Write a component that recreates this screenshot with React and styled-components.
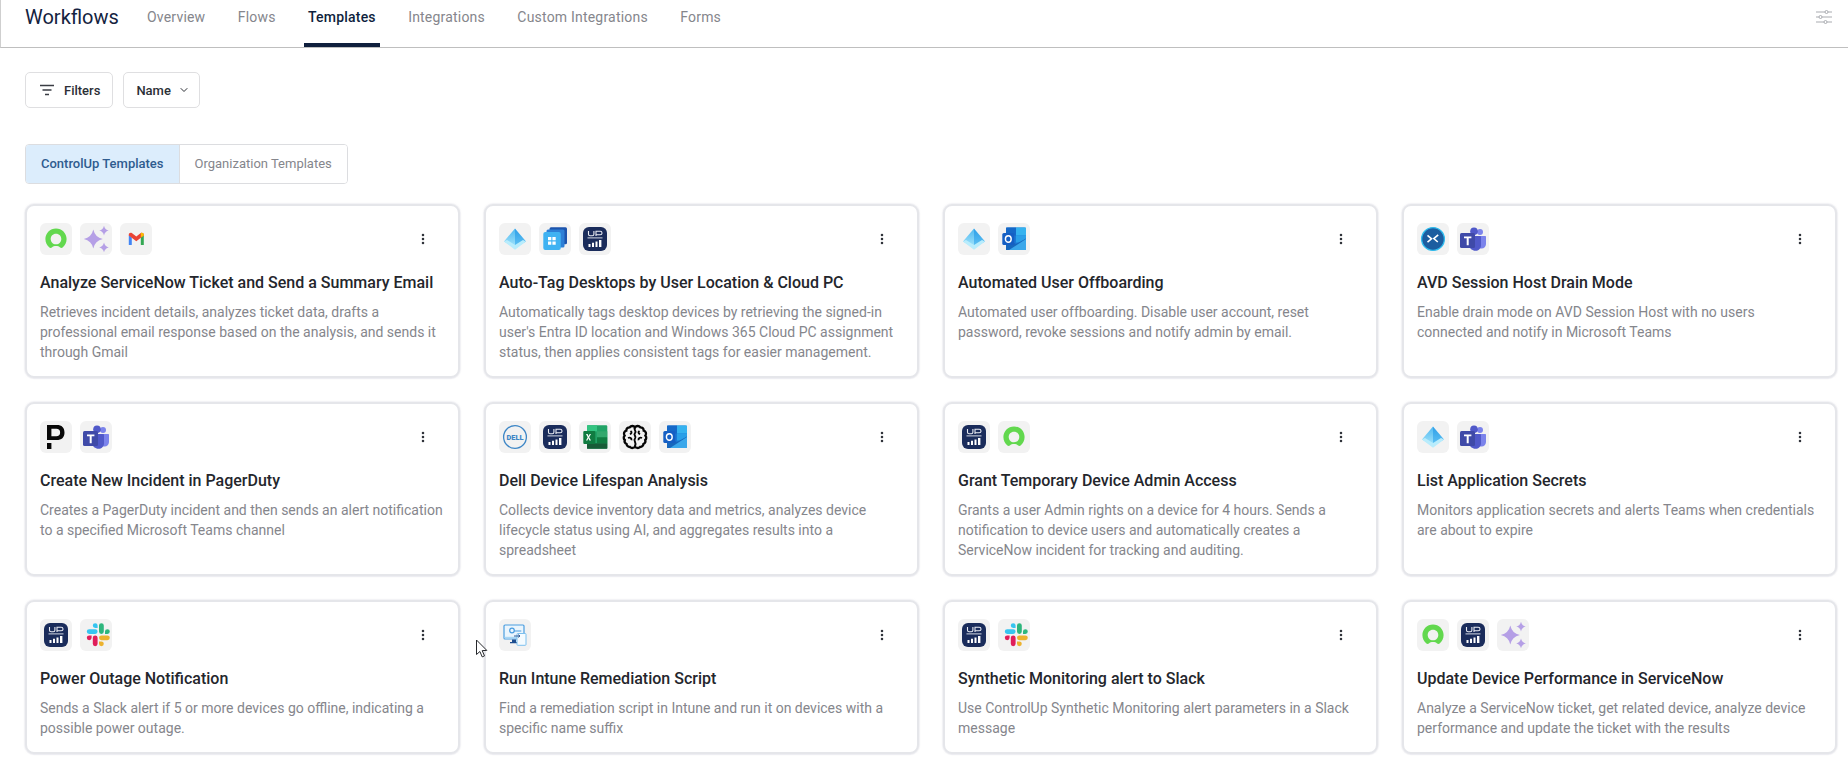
import React from "react";
import styled, { createGlobalStyle } from "styled-components";
import { ChevronDown, MoreVertical } from "lucide-react";

const Global = createGlobalStyle`
  html, body { margin: 0; padding: 0; background: #fff; }
  body { font-family: Roboto, "Liberation Sans", sans-serif; }
  * { box-sizing: border-box; }
`;

const Page = styled.div`
  position: relative;
  width: 1848px;
  height: 768px;
  overflow: hidden;
  background: #fff;
`;
const Header = styled.header`
  height: 48px;
  display: flex;
  align-items: stretch;
  padding: 0 16px 0 24px;
  border-left: 1px solid #cfcfcf;
  border-bottom: 1px solid #bfbfbf;
`;
const Brand = styled.h1`
  margin: 0 25px 0 0;
  font-size: 20px;
  line-height: 35px;
  font-weight: 400;
  color: #14233f;
  width: 93px;
  white-space: nowrap;
`;
const Nav = styled.nav`
  display: flex;
  gap: 24.4px;
  flex: 1;
`;
const NavTab = styled.a`
  padding: 0 4px;
  height: 47px;
  font-size: 14px;
  line-height: 35px;
  letter-spacing: 0.2px;
  font-weight: ${(p) => (p.$active ? 500 : 400)};
  color: ${(p) => (p.$active ? "#0f1f3d" : "#85868c")};
  border-bottom: 4px solid ${(p) => (p.$active ? "#0f1f3d" : "transparent")};
`;
const SettingsIcon = styled.div`
  display: flex;
  align-items: flex-start;
  padding-top: 9px;
  color: #a9abb0;
`;
const Content = styled.main`
  padding: 24px 11px 0 25px;
`;
const Toolbar = styled.div`
  display: flex;
  gap: 10px;
`;
const ToolButton = styled.button`
  height: 36px;
  display: flex;
  align-items: center;
  gap: ${(p) => p.$gap}px;
  padding: 0 ${(p) => p.$right}px 0 ${(p) => p.$left}px;
  background: #fff;
  border: 1px solid #dfdfe1;
  border-radius: 5px;
  font: 500 13px Roboto, sans-serif;
  color: #2c2f36;
`;
const Segmented = styled.div`
  display: inline-flex;
  margin-top: 36px;
  height: 40px;
  border: 1px solid #dcdde0;
  border-radius: 4px;
  overflow: hidden;
`;
const Segment = styled.div`
  display: flex;
  align-items: center;
  padding: 0 15px 2px;
  font-size: 13px;
  font-weight: ${(p) => (p.$active ? 500 : 400)};
  color: ${(p) => (p.$active ? "#2f5c8f" : "#85868c")};
  background: ${(p) => (p.$active ? "#dcedfc" : "#fff")};
  & + & { border-left: 1px solid #dcdde0; }
`;
const Grid = styled.section`
  display: grid;
  grid-template-columns: repeat(4, 435px);
  column-gap: 24px;
  row-gap: 24px;
  margin-top: 20px;
  align-items: start;
`;
const Card = styled.article`
  position: relative;
  height: ${(p) => (p.$tall ? "174px" : "154px")};
  padding: 17px 13px 0;
  background: #fff;
  border: 2px solid #e5e6ea;
  border-radius: 9px;
  box-shadow: 0 0 1px 1px rgba(229, 230, 236, 0.5), 0 1px 1px rgba(30, 35, 70, 0.05);
`;
const CardHead = styled.div`
  display: flex;
  justify-content: space-between;
  align-items: center;
  padding-right: 15px;
`;
const IconRow = styled.div`
  display: flex;
  gap: 8px;
`;
const Tile = styled.span`
  width: 32px;
  height: 32px;
  border-radius: 6px;
  background: #f2f2f2;
  display: flex;
  align-items: center;
  justify-content: center;
`;
const MenuButton = styled.span`
  display: flex;
  color: #30333a;
`;
const Title = styled.h3`
  margin: 16px 0 7px;
  font-size: 16px;
  line-height: 24px;
  font-weight: 500;
  color: #24262c;
  white-space: nowrap;
`;
const Desc = styled.p`
  margin: 0;
  font-size: 14px;
  line-height: 20px;
  color: #85868c;
`;
const CursorMark = styled.svg`
  position: absolute;
  left: 475px;
  top: 639px;
`;

const Svg = ({ children, size = 32 }) => (
  <svg width={size} height={size} viewBox="0 0 32 32">{children}</svg>
);
const star = (x, y, r) =>
  `M${x} ${y - r}Q${x + r * 0.18} ${y - r * 0.18} ${x + r} ${y}Q${x + r * 0.18} ${y + r * 0.18} ${x} ${y + r}Q${x - r * 0.18} ${y + r * 0.18} ${x - r} ${y}Q${x - r * 0.18} ${y - r * 0.18} ${x} ${y - r}Z`;

const icons = {
  sn: (
    <Svg>
      <path d="M16 5.4c-5.9 0-10.6 4.7-10.6 10.6 0 3.4 1.5 6.6 4 8.5.8.6 1.8.5 2.5-.1 1-.9 2.4-1.4 4.1-1.4s3.1.5 4.1 1.4c.7.6 1.7.7 2.5.1 2.5-1.9 4-5.1 4-8.5C26.6 10.1 21.9 5.4 16 5.4zm0 15.9c-3.2 0-5.3-2.4-5.3-5.3s2.1-5.3 5.3-5.3 5.3 2.4 5.3 5.3-2.1 5.3-5.3 5.3z" fill="#62d84e" />
    </Svg>
  ),
  spark: (
    <Svg>
      <path d={star(13.3, 16, 9.5)} fill="#b59fe6" />
      <path d={star(24, 7.6, 4.8)} fill="#b59fe6" />
      <path d={star(24, 24.4, 4.8)} fill="#b59fe6" />
    </Svg>
  ),
  gmail: (
    <Svg>
      <path d="M8.8 12v10h2.4a.6.6 0 0 0 .6-.6V14.6z" fill="#4285f4" />
      <path d="M23.8 12v10h-2.4a.6.6 0 0 1-.6-.6V14.6z" fill="#34a853" />
      <path d="M8.8 11.5c0-1.5 1.8-2.3 3-1.4l4.5 3.4 4.5-3.4c1.2-.9 3-.1 3 1.4v1.1l-7.5 5.6-7.5-5.6z" fill="#ea4335" />
      <path d="M20.8 11.2v3.4l3-2.1v-1c0-1.5-1.8-2.3-3-1.4z" fill="#fbbc04" />
    </Svg>
  ),
  entra: (
    <Svg>
      <defs>
        <linearGradient id="en1" x1="0" y1="0" x2="0" y2="1"><stop offset="0" stopColor="#4fb8f0" /><stop offset="1" stopColor="#a8e6fb" /></linearGradient>
        <linearGradient id="en2" x1="0" y1="0" x2="0" y2="1"><stop offset="0" stopColor="#2f9fe8" /><stop offset="1" stopColor="#62c4f4" /></linearGradient>
      </defs>
      <path d="M16 5.5L5 18.4l11 6.6z" fill="url(#en1)" />
      <path d="M16 5.5l11 12.9-11 6.6z" fill="url(#en2)" />
      <path d="M5 18.4l3-1.5 8 5 8-5 3 1.5-11 8.4z" fill="#b8ecfc" />
    </Svg>
  ),
  w365: (
    <Svg>
      <rect x="10.5" y="4.3" width="17.5" height="17" rx="1.5" fill="#1d54ad" />
      <rect x="7.5" y="6.5" width="18" height="18" rx="1.5" fill="#2d7fd6" />
      <rect x="4.3" y="9" width="17.5" height="18" rx="2" fill="#3fb2f2" />
      <path d="M9 14h3.3v3.3H9zM13.4 14h3.3v3.3h-3.3zM9 18.4h3.3v3.3H9zM13.4 18.4h3.3v3.3h-3.3z" fill="#fff" />
    </Svg>
  ),
  up: (
    <Svg>
      <rect x="4" y="4" width="24" height="24" rx="6" fill="#1a2c5b" />
      <path d="M9.5 8v3.2c0 1 .6 1.5 1.6 1.5h2.2c1 0 1.6-.5 1.6-1.5V8M17 13V8.3h4.2c1.2 0 1.8.6 1.8 1.6v.3c0 1-.6 1.6-1.8 1.6H17" fill="none" stroke="#e9ecf3" strokeWidth="1.1" />
      <path d="M8.5 14.9H23.5" stroke="#e9ecf3" strokeWidth="0.9" />
      <path d="M9.5 21h2v3h-2zM13 19.8h2V24h-2zM16.5 18.4h2V24h-2zM20 17h2.4v7H20z" fill="#fff" />
    </Svg>
  ),
  outlook: (
    <Svg>
      <rect x="8" y="4.5" width="20" height="22.5" rx="1.5" fill="#1b78d4" />
      <rect x="8" y="4.5" width="10" height="8" fill="#1568c8" />
      <rect x="18" y="4.5" width="10" height="8" fill="#35b2ef" />
      <rect x="18" y="12.5" width="10" height="7" fill="#2a9fe8" />
      <path d="M8 16l10 5 10-5.5V27H8z" fill="#1767bd" />
      <path d="M11 27l17-11v11z" fill="#3ba7ea" />
      <rect x="4.3" y="10" width="12" height="12" rx="1.5" fill="#155fc4" />
      <ellipse cx="10.3" cy="16" rx="2.9" ry="3.2" fill="none" stroke="#fff" strokeWidth="1.4" />
    </Svg>
  ),
  avd: (
    <Svg>
      <circle cx="16" cy="16" r="11.4" fill="#1c5da0" stroke="#2fbcee" strokeWidth="1.3" />
      <path d="M10.5 12.4l4 3.4-4 3.4M21.2 11.8l-4.4 3.8 4 3.4" fill="none" stroke="#fff" strokeWidth="1.6" />
    </Svg>
  ),
  teams: (
    <Svg>
      <circle cx="23" cy="9" r="3" fill="#7b83eb" />
      <circle cx="17" cy="8.2" r="3.8" fill="#5059c9" />
      <path d="M19 13h9c.6 0 1 .4 1 1v7c0 2.5-2 4.5-4.4 4.5-2.6 0-5.6-2-5.6-4.5z" fill="#7b83eb" />
      <path d="M11.5 13H23c.6 0 1 .5 1 1v8.5c0 3-2.5 5.3-5.5 5.3-3.3 0-6-2.5-7-5.8z" fill="#5059c9" />
      <rect x="3" y="10" width="15" height="15" rx="1.5" fill="#3f4aa8" />
      <path d="M7 13.6h7.4v1.7h-2.7v6.9H9.7v-6.9H7z" fill="#fff" />
    </Svg>
  ),
  pager: (
    <Svg>
      <path d="M7 4h9.8c5 0 7.7 2.6 7.7 7.4 0 4.9-2.9 7.6-7.9 7.6H7zm4.4 3.8v7.4h4.9c2.5 0 3.8-1.3 3.8-3.8 0-2.4-1.3-3.6-3.8-3.6zM7 22h4.4v6H7z" fill="#080808" fillRule="evenodd" />
    </Svg>
  ),
  dell: (
    <Svg>
      <circle cx="16" cy="16" r="11.4" fill="none" stroke="#3d86c6" strokeWidth="1.3" />
      <text x="16" y="18.6" textAnchor="middle" fontFamily="Roboto, sans-serif" fontWeight="900" fontSize="7.4" fill="#3d86c6">DELL</text>
    </Svg>
  ),
  excel: (
    <Svg>
      <rect x="8" y="4.3" width="20.3" height="23.4" rx="1.2" fill="#21a366" />
      <rect x="8" y="4.3" width="10" height="6" fill="#33c481" />
      <rect x="18" y="10.3" width="10.3" height="6" fill="#33a86d" />
      <rect x="18" y="16.3" width="10.3" height="6" fill="#107c41" />
      <rect x="8" y="22.3" width="20.3" height="5.4" fill="#185c37" />
      <rect x="4.3" y="10" width="12" height="13" rx="1" fill="#107c41" />
      <path d="M7 13l1.7 3.3L7 19.5h1.4l1-2.3 1 2.3H12l-1.8-3.2L12 13h-1.4l-1 2.2-1-2.2z" fill="#fff" />
    </Svg>
  ),
  brain: (
    <Svg>
      <path
        d="M16 6.5A3.2 3.2 0 0 0 10.7 6.3 3.2 3.2 0 0 0 7.3 9.6 3.2 3.2 0 0 0 5.6 14.6 3 3 0 0 0 5.8 19 3.2 3.2 0 0 0 7.6 23 3.2 3.2 0 0 0 11 26 3.2 3.2 0 0 0 16 25.5 3.2 3.2 0 0 0 21 26 3.2 3.2 0 0 0 24.4 23 3.2 3.2 0 0 0 26.2 19 3 3 0 0 0 26.4 14.6 3.2 3.2 0 0 0 24.7 9.6 3.2 3.2 0 0 0 21.3 6.3 3.2 3.2 0 0 0 16 6.5Z"
        fill="none" stroke="#050505" strokeWidth="2.3"
      />
      <path d="M16 6.5c-2.2 2.2 2.2 3.3 0 5.6s2.2 3.3 0 5.6 2.2 3.3 0 7.8M11.5 10c1.8 1.2 1 2.6-.6 3.2M9 17c2.2-1 3.8.2 3.4 2.2M20.5 10c-1.8 1.2-1 2.6.6 3.2M23 17c-2.2-1-3.8.2-3.4 2.2" fill="none" stroke="#050505" strokeWidth="1.9" />
    </Svg>
  ),
  intune: (
    <Svg>
      <rect x="5" y="6" width="20" height="14" rx="1" fill="#eaf5fd" stroke="#4a9de0" strokeWidth="1.2" />
      <path d="M5.6 17.8h18.8v1.6H5.6z" fill="#a8d6f4" />
      <path d="M13 20.5h4v2.5h2v1.2h-8V23h2z" fill="#1d4d8f" />
      <circle cx="13" cy="11.5" r="2.3" fill="none" stroke="#4a9de0" strokeWidth="1.2" />
      <path d="M15.3 12h7" stroke="#4a9de0" strokeWidth="1" />
      <rect x="18" y="14.5" width="9" height="11.8" rx="0.8" fill="#f4fbff" stroke="#7cc0ee" strokeWidth="1" />
      <path d="M15 17h6m-1.8-1.4l1.8 1.4-1.8 1.4" fill="none" stroke="#1d4d8f" strokeWidth="0.9" />
    </Svg>
  ),
  slack: (
    <Svg>
      <path d="M11.6 18.8a2.4 2.4 0 1 1-2.4-2.4h2.4zM12.8 18.8a2.4 2.4 0 0 1 4.8 0v6a2.4 2.4 0 0 1-4.8 0z" fill="#e01e5a" />
      <path d="M15.2 9a2.4 2.4 0 1 1 2.4-2.4V9zM15.2 10.2a2.4 2.4 0 0 1 0 4.8h-6a2.4 2.4 0 0 1 0-4.8z" fill="#36c5f0" />
      <path d="M25 12.6a2.4 2.4 0 1 1 2.4 2.4H25zM23.8 12.6a2.4 2.4 0 0 1-4.8 0v-6a2.4 2.4 0 0 1 4.8 0z" fill="#2eb67d" />
      <path d="M21.4 22.4a2.4 2.4 0 1 1-2.4 2.4v-2.4zM21.4 21.2a2.4 2.4 0 0 1 0-4.8h6a2.4 2.4 0 0 1 0 4.8z" fill="#ecb22e" />
    </Svg>
  ),
};

const templates = [
  { icons: ["sn", "spark", "gmail"], title: "Analyze ServiceNow Ticket and Send a Summary Email", desc: "Retrieves incident details, analyzes ticket data, drafts a professional email response based on the analysis, and sends it through Gmail" },
  { icons: ["entra", "w365", "up"], title: "Auto-Tag Desktops by User Location & Cloud PC", desc: "Automatically tags desktop devices by retrieving the signed-in user's Entra ID location and Windows 365 Cloud PC assignment status, then applies consistent tags for easier management." },
  { icons: ["entra", "outlook"], title: "Automated User Offboarding", desc: "Automated user offboarding. Disable user account, reset password, revoke sessions and notify admin by email." },
  { icons: ["avd", "teams"], title: "AVD Session Host Drain Mode", desc: "Enable drain mode on AVD Session Host with no users connected and notify in Microsoft Teams" },
  { icons: ["pager", "teams"], title: "Create New Incident in PagerDuty", desc: "Creates a PagerDuty incident and then sends an alert notification to a specified Microsoft Teams channel" },
  { icons: ["dell", "up", "excel", "brain", "outlook"], title: "Dell Device Lifespan Analysis", desc: "Collects device inventory data and metrics, analyzes device lifecycle status using AI, and aggregates results into a spreadsheet" },
  { icons: ["up", "sn"], title: "Grant Temporary Device Admin Access", desc: "Grants a user Admin rights on a device for 4 hours. Sends a notification to device users and automatically creates a ServiceNow incident for tracking and auditing." },
  { icons: ["entra", "teams"], title: "List Application Secrets", desc: "Monitors application secrets and alerts Teams when credentials are about to expire" },
  { icons: ["up", "slack"], title: "Power Outage Notification", desc: "Sends a Slack alert if 5 or more devices go offline, indicating a possible power outage." },
  { icons: ["intune"], title: "Run Intune Remediation Script", desc: "Find a remediation script in Intune and run it on devices with a specific name suffix" },
  { icons: ["up", "slack"], title: "Synthetic Monitoring alert to Slack", desc: "Use ControlUp Synthetic Monitoring alert parameters in a Slack message" },
  { icons: ["sn", "up", "spark"], title: "Update Device Performance in ServiceNow", desc: "Analyze a ServiceNow ticket, get related device, analyze device performance and update the ticket with the results" },
];

const tabs = ["Overview", "Flows", "Templates", "Integrations", "Custom Integrations", "Forms"];

export default function App() {
  return (
    <Page>
      <Global />
      <Header>
        <Brand>Workflows</Brand>
        <Nav>
          {tabs.map((t) => (
            <NavTab key={t} $active={t === "Templates"}>{t}</NavTab>
          ))}
        </Nav>
        <SettingsIcon>
          <svg width="16" height="16" viewBox="0 0 16 16" fill="none" stroke="currentColor" strokeWidth="1">
            <path d="M0 3h9M12 3h4M0 8h3M6 8h10M0 13h8M11 13h5" />
            <circle cx="10.5" cy="3" r="1.5" />
            <circle cx="4.5" cy="8" r="1.5" />
            <circle cx="9.5" cy="13" r="1.5" />
          </svg>
        </SettingsIcon>
      </Header>
      <Content>
        <Toolbar>
          <ToolButton $left={14} $right={12} $gap={10}>
            <svg width="14" height="12" viewBox="0 0 14 12" fill="none" stroke="#3a3d44" strokeWidth="1.6">
              <path d="M0 1.5h14M2.5 6h9M5 10.5h4" />
            </svg>
            Filters
          </ToolButton>
          <ToolButton $left={12} $right={9} $gap={7}>
            Name
            <ChevronDown size={12} color="#2c2f36" strokeWidth={2} />
          </ToolButton>
        </Toolbar>
        <Segmented>
          <Segment $active>ControlUp Templates</Segment>
          <Segment>Organization Templates</Segment>
        </Segmented>
        <Grid>
          {templates.map((t, i) => (
            <Card key={t.title} $tall={i < 8}>
              <CardHead>
                <IconRow>
                  {t.icons.map((n, j) => (
                    <Tile key={j}>{icons[n]}</Tile>
                  ))}
                </IconRow>
                <MenuButton><MoreVertical size={14} strokeWidth={2.4} /></MenuButton>
              </CardHead>
              <Title>{t.title}</Title>
              <Desc>{t.desc}</Desc>
            </Card>
          ))}
        </Grid>
      </Content>
      <CursorMark width="14" height="20" viewBox="0 0 14 20">
        <path d="M1.5 1v14.5l3.4-3 2.3 5.4 2.3-1-2.3-5.3 4.6-.2z" fill="#fff" stroke="#26282c" strokeWidth="1" />
      </CursorMark>
    </Page>
  );
}
